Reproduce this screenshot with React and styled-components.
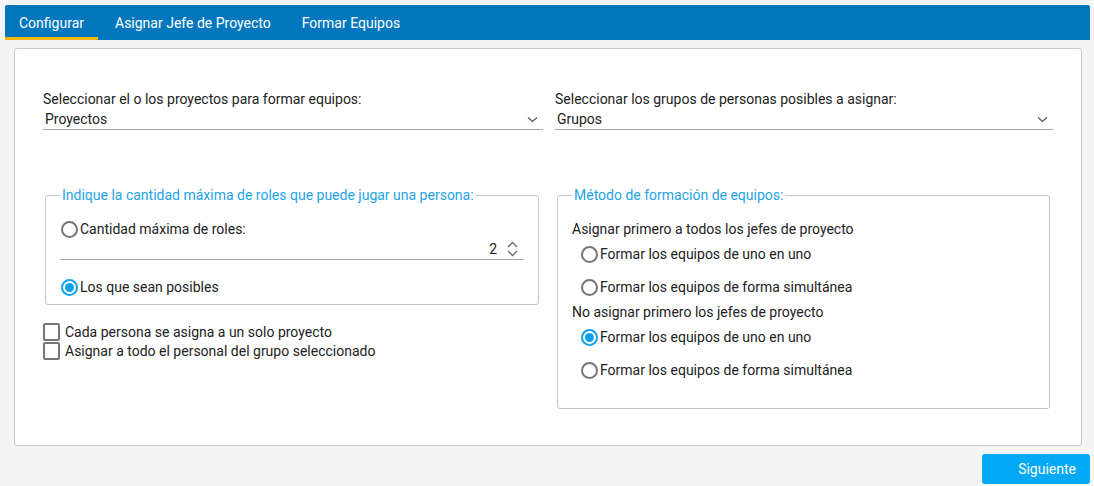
import React from 'react';
import styled, { createGlobalStyle } from 'styled-components';

const GlobalStyle = createGlobalStyle`
  body {
    margin: 0;
    background-color: #f4f4f4;
    font-family: Roboto, "Liberation Sans", Arial, sans-serif;
    font-size: 14px;
    color: #222222;
  }
`;

const Page = styled.div`
  padding: 5px 4px 3px 5px;
  display: flex;
  flex-direction: column;
`;

const TabBar = styled.div`
  height: 35px;
  display: flex;
  gap: 3px;
  background-color: #0277bd;
  border-radius: 2px 2px 0 0;
`;

const Tab = styled.div`
  height: 35px;
  box-sizing: border-box;
  padding: 3px 14px 0 14px;
  display: flex;
  align-items: center;
  color: #ffffff;
  font-size: 14px;
  border-bottom: 3px solid ${({ active }) => (active ? '#f6b900' : 'transparent')};
`;

const Panel = styled.div`
  margin: 8px 8px 0 9px;
  background-color: #ffffff;
  border: 1px solid #c9c9c9;
  border-radius: 3px;
  padding: 41px 28px 36px 28px;
  display: grid;
  grid-template-columns: 500px 498px;
  column-gap: 12px;
`;

const Column = styled.div`
  display: flex;
  flex-direction: column;
`;

const FieldLabel = styled.div`
  line-height: 19px;
  height: 19px;
`;

const Select = styled.div`
  height: 20px;
  display: flex;
  align-items: center;
  justify-content: space-between;
  padding: 0 5px 0 2px;
  border-bottom: 1px solid #a8a8a8;
`;

const Fieldset = styled.fieldset`
  margin: 57px ${({ mr }) => mr}px 0 2px;
  padding: 16px 14px ${({ pb }) => pb}px 14px;
  border: 1px solid #c4c4c4;
  border-radius: 3px;
  min-width: 0;
`;

const Legend = styled.legend`
  padding: 0 2px;
  color: #1fa3e6;
  line-height: 16px;
`;

const RadioRow = styled.label`
  height: ${({ h }) => h}px;
  display: flex;
  align-items: center;
  margin-top: ${({ mt }) => mt || 0}px;
  margin-left: ${({ indent }) => indent || 0}px;
`;

const RadioCircle = styled.span`
  width: 17px;
  height: 17px;
  box-sizing: border-box;
  border-radius: 50%;
  border: 2px solid ${({ checked }) => (checked ? '#0ea0ec' : '#767676')};
  display: flex;
  align-items: center;
  justify-content: center;
  margin-right: 2px;
  margin-left: 1px;

  &::after {
    content: '';
    width: 9px;
    height: 9px;
    border-radius: 50%;
    background-color: ${({ checked }) => (checked ? '#0ea0ec' : 'transparent')};
  }
`;

const NumberRow = styled.div`
  height: 20px;
  display: flex;
  align-items: center;
  justify-content: flex-end;
  gap: 10px;
  padding-right: 6px;
  border-bottom: 1px solid #a8a8a8;
  margin-bottom: 12px;
`;

const Heading = styled.div`
  height: 20px;
  line-height: 20px;
`;

const CheckList = styled.div`
  margin-top: 17px;
  display: flex;
  flex-direction: column;
`;

const CheckRow = styled.label`
  height: 19px;
  display: flex;
  align-items: center;
  gap: 5px;
`;

const CheckBox = styled.span`
  width: 17px;
  height: 18px;
  box-sizing: border-box;
  border: 2px solid #767676;
  border-radius: 2px;
`;

const Footer = styled.div`
  display: flex;
  justify-content: flex-end;
  margin-top: 8px;
`;

const Button = styled.button`
  width: 108px;
  height: 30px;
  border: none;
  border-radius: 3px;
  background-color: #03a9f4;
  color: #ffffff;
  font-family: Roboto, "Liberation Sans", Arial, sans-serif;
  font-size: 14px;
  display: flex;
  align-items: center;
  justify-content: flex-end;
  padding: 0 14px 0 0;
`;

const Chevron = () => (
  <svg width="11" height="7" viewBox="0 0 11 7">
    <path d="M1 1.5 L5.5 5.5 L10 1.5" fill="none" stroke="#555" strokeWidth="1.2" />
  </svg>
);

const Spinner = () => (
  <svg width="11" height="16" viewBox="0 0 11 16">
    <path d="M1 6 L5.5 1.5 L10 6" fill="none" stroke="#666" strokeWidth="1.3" />
    <path d="M1 10 L5.5 14.5 L10 10" fill="none" stroke="#666" strokeWidth="1.3" />
  </svg>
);

const Radio = ({ checked, children, h = 20, mt, indent }) => (
  <RadioRow h={h} mt={mt} indent={indent}>
    <RadioCircle checked={checked} />
    {children}
  </RadioRow>
);

const App = () => (
  <>
    <GlobalStyle />
    <Page>
      <TabBar>
        <Tab active>Configurar</Tab>
        <Tab>Asignar Jefe de Proyecto</Tab>
        <Tab>Formar Equipos</Tab>
      </TabBar>
      <Panel>
        <Column>
          <FieldLabel>Seleccionar el o los proyectos para formar equipos:</FieldLabel>
          <Select>
            Proyectos
            <Chevron />
          </Select>
          <Fieldset mr={4} pb={2}>
            <Legend>Indique la cantidad máxima de roles que puede jugar una persona:</Legend>
            <Radio>Cantidad máxima de roles:</Radio>
            <NumberRow>
              2
              <Spinner />
            </NumberRow>
            <Radio checked h={30}>Los que sean posibles</Radio>
          </Fieldset>
          <CheckList>
            <CheckRow>
              <CheckBox />
              Cada persona se asigna a un solo proyecto
            </CheckRow>
            <CheckRow>
              <CheckBox />
              Asignar a todo el personal del grupo seleccionado
            </CheckRow>
          </CheckList>
        </Column>
        <Column>
          <FieldLabel>Seleccionar los grupos de personas posibles a asignar:</FieldLabel>
          <Select>
            Grupos
            <Chevron />
          </Select>
          <Fieldset mr={3} pb={23}>
            <Legend>Método de formación de equipos:</Legend>
            <Heading>Asignar primero a todos los jefes de proyecto</Heading>
            <Radio h={30} indent={8}>Formar los equipos de uno en uno</Radio>
            <Radio h={30} mt={3} indent={8}>Formar los equipos de forma simultánea</Radio>
            <Heading>No asignar primero los jefes de proyecto</Heading>
            <Radio checked h={30} indent={8}>Formar los equipos de uno en uno</Radio>
            <Radio h={30} mt={3} indent={8}>Formar los equipos de forma simultánea</Radio>
          </Fieldset>
        </Column>
      </Panel>
      <Footer>
        <Button>Siguiente</Button>
      </Footer>
    </Page>
  </>
);

export default App;
